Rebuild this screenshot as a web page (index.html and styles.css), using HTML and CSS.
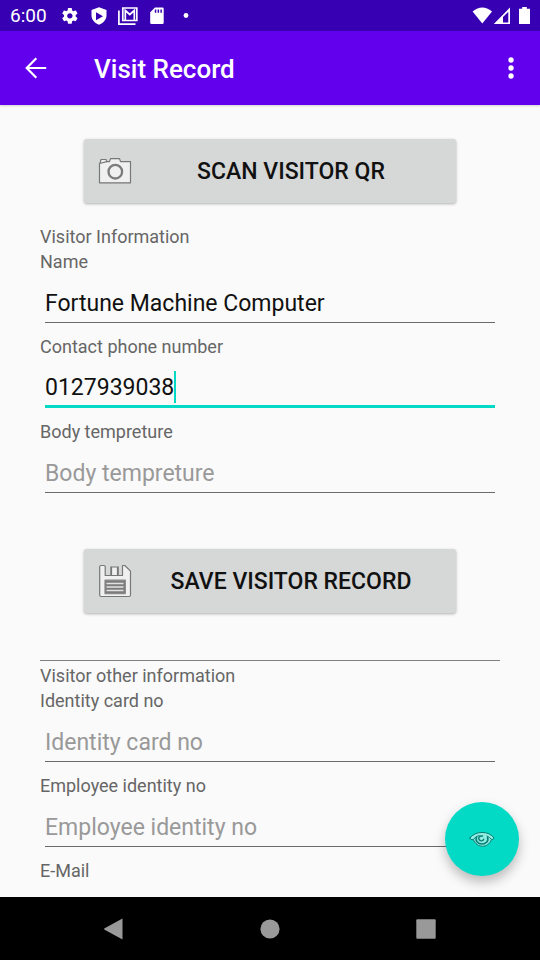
FILE: index.html
```html
<!DOCTYPE html>
<html lang="en">
<head>
<meta charset="utf-8">
<meta name="viewport" content="width=device-width, initial-scale=1">
<title>Visit Record</title>
<link rel="stylesheet" href="styles.css">
</head>
<body>
<div class="status-bar">
  <span class="clock">6:00</span>
  <svg class="status-left" width="134" height="20" viewBox="0 0 134 20" fill="#fff" aria-hidden="true">
    <g transform="translate(0.500 .5) scale(.78)"><path d="M19.43 12.98c.04-.32.07-.64.07-.98s-.03-.66-.07-.98l2.11-1.65c.19-.15.24-.42.12-.64l-2-3.46c-.12-.22-.39-.3-.61-.22l-2.49 1c-.52-.4-1.08-.73-1.69-.98l-.38-2.65C14.460 2.180 14.250 2 14 2h-4c-.25 0-.46.18-.49.42l-.38 2.650c-.61.25-1.170.59-1.690.98l-2.490-1c-.23-.09-.49 0-.61.22l-2 3.460c-.13.22-.07.49.12.64l2.110 1.650c-.04.32-.07.65-.07.98s.03.66.07.98l-2.110 1.650c-.19.15-.24.42-.12.64l2 3.460c.12.22.39.3.61.22l2.490-1c.52.4 1.080.73 1.690.98l.38 2.650c.03.24.24.42.49.42h4c.25 0 .46-.18.49-.42l.38-2.650c.61-.25 1.170-.59 1.690-.98l2.490 1c.23.09.49 0 .61-.22l2-3.460c.12-.22.07-.49-.12-.64l-2.110-1.650zM12 15.500c-1.930 0-3.500-1.570-3.500-3.500s1.570-3.500 3.500-3.500 3.500 1.570 3.500 3.500-1.570 3.500-3.500 3.500z"/></g>
    <path fill-rule="evenodd" d="M39 1.200l7.500 2.800v5.500c0 4.200-3.200 7.600-7.500 9.300-4.300-1.700-7.500-5.100-7.500-9.300V4zM36 6.200v8l7-4z"/>
    <path fill="none" stroke="#fff" stroke-width="1.700" d="M58.900 4.500v13.600h16.600M62.800 2h14v12.500h-14z"/>
    <path fill="none" stroke="#fff" stroke-width="1.700" d="M65.300 14V4.500l4.500 4 4.500-4V14"/>
    <path fill-rule="evenodd" d="M95 1.500h7.500q1.200 0 1.200 1.200v14q0 1.300-1.300 1.300H91.500q-1.300 0-1.300-1.300V6.300zM94.800 3.500v3.200h1.500V3.500zm2.800 0v3.200h1.500V3.500zm2.800 0v3.200h1.500V3.500z"/>
    <circle cx="126" cy="9.500" r="2.400"/>
  </svg>
  <svg class="status-right" width="58" height="20" viewBox="0 0 58 20" fill="#fff" aria-hidden="true">
    <path d="M10.300 17.500L.6 5.400Q10.300-2.400 20 5.400z"/>
    <path fill-rule="evenodd" d="M38 1.500V18H21.800zM36.300 5.700L31 11v5.400h5.300z"/>
    <path d="M50.200 1h4.600v1.700H58V18H47V2.700h3.200z"/>
  </svg>
</div>
<header class="app-bar">
  <button class="icon-button" type="button" aria-label="Back">
    <svg width="22" height="22" viewBox="0 0 22 22" fill="none" stroke="#fff" stroke-width="2.200"><path d="M21.200 11H2M11.300 1.200L1.700 11l9.600 9.800"/></svg>
  </button>
  <h1 class="title">Visit Record</h1>
  <button class="icon-button menu-button" type="button" aria-label="More options">
    <svg width="6" height="22" viewBox="0 0 6 22" fill="#fff"><circle cx="3" cy="3" r="2.700"/><circle cx="3" cy="11" r="2.700"/><circle cx="3" cy="19" r="2.700"/></svg>
  </button>
</header>
<main class="content">
  <form class="form">
    <button class="action" type="button">
      <svg class="action-icon" width="34" height="34" viewBox="0 0 34 34" fill="#f0f0f0" stroke="#777" stroke-width="1.200" stroke-linejoin="round" aria-hidden="true">
        <path d="M2 9.500l1-4h5l.8 1.800M1.500 9.500L9 7.600h2.500l1-3h9l1 3h10v21.200h-31z"/>
        <circle cx="17.300" cy="17.700" r="6.800" stroke="#7c7c7c" stroke-width="2.300"/>
      </svg>
      <span class="action-text">Scan visitor QR</span>
    </button>
    <h2 class="section-title">Visitor Information</h2>
    <label class="label" for="name">Name</label>
    <div class="field"><input class="input" id="name" type="text" value="Fortune Machine Computer"></div>
    <label class="label" for="phone">Contact phone number</label>
    <div class="field"><input class="input input-active" id="phone" type="tel" value="0127939038"><span class="caret"></span></div>
    <label class="label" for="temp">Body tempreture</label>
    <div class="field"><input class="input" id="temp" type="text" placeholder="Body tempreture"></div>
    <button class="action action-save" type="submit">
      <svg class="action-icon" width="34" height="34" viewBox="0 0 34 34" fill="#f0f0f0" stroke="#777" stroke-width="1.200" stroke-linejoin="round" aria-hidden="true">
        <path d="M3 1.500h3q1.200 0 1.200 1.200v8.800h17.300V1.500h2.300l5.700 5.700V31q0 1.500-1.500 1.500H3.200q-1.500 0-1.500-1.500V3q0-1.500 1.300-1.500z"/>
        <path d="M13.500 3h6v8.500h-6z"/>
        <path d="M12.800 2.500v9M20.300 2.500v9" stroke-width="1"/>
        <path d="M7 16.200h20.300v13.500H7z" fill="#7c7c7c" stroke="#888"/>
        <path d="M8.500 19.500h17M8.500 23h17M8.500 26.500h17" stroke="#e2e2e2" stroke-width="1.300"/>
      </svg>
      <span class="action-text">Save visitor record</span>
    </button>
    <hr class="divider">
    <h2 class="section-title">Visitor other information</h2>
    <label class="label" for="card">Identity card no</label>
    <div class="field"><input class="input" id="card" type="text" placeholder="Identity card no"></div>
    <label class="label" for="employee">Employee identity no</label>
    <div class="field"><input class="input" id="employee" type="text" placeholder="Employee identity no"></div>
    <label class="label" for="email">E-Mail</label>
    <div class="field"><input class="input" id="email" type="email"></div>
  </form>
</main>
<button class="fab" type="button" aria-label="View">
  <svg width="26" height="18" viewBox="0 0 26 18" fill="none" stroke="#087e75" stroke-width="1" stroke-linejoin="round" stroke-linecap="round" aria-hidden="true">
    <path d="M1 8C6 .5 20 .5 25 8q-.5 1.600-2.600 1.600C19 18.500 8 18.500 4.300 9.500 2.500 10 1 9.500 1 8z" fill="#8fede2"/>
    <path d="M4.500 9.200Q7 6 10 5.500M22.400 9.300Q20.500 7 18 6"/>
    <path d="M7.500 7.500C6 11 9 14 13 14s7-3 5.500-6.500" stroke-width="1.600"/>
    <path d="M13.500 6C10 5.500 9 8 10.200 9.800c1.300 1.700 4.200 1.300 4.500-.6" stroke-width="1.400"/>
  </svg>
</button>
<nav class="nav-bar" aria-label="System">
  <button class="nav-button" type="button" aria-label="Back"><svg width="20" height="22" viewBox="0 0 20 22" fill="#999"><path d="M18.500 .5v21L.2 11.500v-1z"/></svg></button>
  <button class="nav-button" type="button" aria-label="Home"><svg width="20" height="20" viewBox="0 0 20 20" fill="#999"><circle cx="10" cy="10" r="9.600"/></svg></button>
  <button class="nav-button" type="button" aria-label="Overview"><svg width="20" height="20" viewBox="0 0 20 20" fill="#999"><rect x=".3" y=".3" width="19.400" height="19.400" rx="1"/></svg></button>
</nav>
</body>
</html>
```
FILE: styles.css
```css
* {
  box-sizing: border-box;
}

body {
  position: relative;
  display: flex;
  flex-direction: column;
  height: 100vh;
  margin: 0;
  background: #fafafa;
  color: #111;
  font-family: Roboto, sans-serif;
}

button,
input {
  margin: 0;
  border: 0;
  font-family: inherit;
}

svg {
  display: block;
}

.status-bar {
  display: flex;
  flex: none;
  align-items: center;
  height: 31px;
  padding: 0 10px;
  background: #3700b3;
  color: #fff;
}

.clock {
  width: 50px;
  font-size: 19px;
}

.status-right {
  margin-left: auto;
}

.app-bar {
  z-index: 1;
  display: flex;
  flex: none;
  align-items: center;
  height: 74px;
  background: #6200ee;
  box-shadow: 0 1px 2px rgba(0, 0, 0, 0.16);
  color: #fff;
}

.icon-button {
  display: flex;
  align-items: center;
  justify-content: center;
  width: 72px;
  height: 72px;
  padding: 0;
  background: none;
}

.menu-button {
  width: 58px;
}

.title {
  flex: 1;
  margin: 0;
  padding: 2px 0 0 22px;
  font-size: 26px;
  font-weight: 500;
}

.content {
  flex: 1;
  min-height: 0;
  overflow: hidden;
}

.form {
  display: flex;
  flex-direction: column;
  padding: 34px 40px 0;
}

.action {
  display: flex;
  align-items: center;
  height: 64px;
  margin: 0 44px 21px;
  padding: 0 14px;
  border-radius: 3px;
  background: #d6d7d7;
  box-shadow: 0 1px 3px rgba(0, 0, 0, 0.3);
  color: #111;
}

.action-text {
  flex: 1;
  padding-left: 8px;
  font-size: 23px;
  font-weight: 500;
  text-align: center;
  text-transform: uppercase;
}

.action-save {
  margin-top: 45px;
  margin-bottom: 47px;
}

.section-title,
.label {
  margin: 0;
  color: #666;
  font-size: 18px;
  font-weight: 400;
  line-height: 25px;
}

.field {
  position: relative;
  height: 60px;
  padding: 11px 5px;
}

.input {
  display: block;
  width: 100%;
  height: 38px;
  padding: 0;
  border-bottom: 1px solid #6b6b6b;
  border-radius: 0;
  outline: 0;
  background: none;
  color: #111;
  font-size: 23px;
}

.input::placeholder {
  color: #999;
  opacity: 1;
}

.input-active {
  border-bottom: 3px solid #03dac5;
}

.caret {
  position: absolute;
  top: 12px;
  left: 134px;
  width: 2px;
  height: 32px;
  background: #03dac5;
}

.divider {
  width: 100%;
  height: 1px;
  margin: 0 0 2px;
  border: 0;
  background: #808080;
}

.fab {
  position: absolute;
  right: 21px;
  bottom: 84px;
  display: flex;
  align-items: center;
  justify-content: center;
  width: 74px;
  height: 74px;
  padding: 0;
  border-radius: 50%;
  background: #03dac5;
  box-shadow: 0 6px 12px rgba(0, 0, 0, 0.26);
}

.nav-bar {
  z-index: 1;
  display: flex;
  flex: none;
  justify-content: center;
  height: 63px;
  background: #000;
}

.nav-button {
  display: flex;
  align-items: center;
  justify-content: center;
  width: 156px;
  padding: 0;
  background: none;
}
```
